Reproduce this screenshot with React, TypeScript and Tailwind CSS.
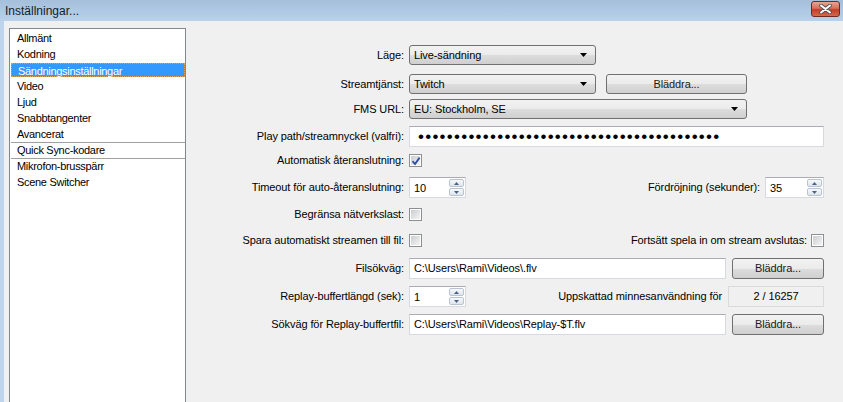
import React from "react";

const listItems: { name: string; selected?: boolean; sep?: boolean }[] = [
  { name: "Allmänt" },
  { name: "Kodning" },
  { name: "Sändningsinställningar", selected: true },
  { name: "Video" },
  { name: "Ljud" },
  { name: "Snabbtangenter" },
  { name: "Avancerat" },
  { name: "Quick Sync-kodare", sep: true },
  { name: "Mikrofon-brusspärr", sep: true },
  { name: "Scene Switcher" },
];

const Label = ({ text }: { text: string }) => (
  <div className="w-[223px] shrink-0 pr-[5px] text-right whitespace-nowrap">{text}</div>
);

const Combo = ({ value, w }: { value: string; w: string }) => (
  <div
    className={`${w} flex h-[20px] shrink-0 items-center justify-between rounded-[3px] border border-[#707070] bg-[linear-gradient(to_bottom,#f2f2f2_0%,#ebebeb_50%,#dddddd_51%,#cfcfcf_100%)] pr-[8px] pl-[4px]`}
  >
    <span>{value}</span>
    <svg width="7" height="4" viewBox="0 0 7 4">
      <path d="M0 0h7L3.5 4z" fill="#000" />
    </svg>
  </div>
);

const Button = ({ w, h }: { w: string; h: string }) => (
  <div
    className={`${w} ${h} flex shrink-0 items-center justify-center rounded-[3px] border border-[#707070] bg-[linear-gradient(to_bottom,#f2f2f2_0%,#ebebeb_50%,#dddddd_51%,#cfcfcf_100%)] text-[#1a1a1a]`}
  >
    Bläddra...
  </div>
);

const TextBox = ({ children, className }: { children: React.ReactNode; className: string }) => (
  <div
    className={`${className} flex h-[21px] items-center overflow-hidden border border-[#d6d9e0] border-t-[#abadb3] bg-white pl-[4px] whitespace-nowrap`}
  >
    {children}
  </div>
);

const SpinButton = ({ up }: { up?: boolean }) => (
  <div className="flex h-[8px] w-[15px] items-center justify-center rounded-[2px] border border-[#b9c4d2] bg-[linear-gradient(to_bottom,#f7f9fb,#dfe5ec)]">
    <svg width="5" height="3" viewBox="0 0 5 3">
      <path d={up ? "M0 3h5L2.5 0z" : "M0 0h5L2.5 3z"} fill="#4d6185" />
    </svg>
  </div>
);

const Spinner = ({ value, w }: { value: string; w: string }) => (
  <div
    className={`${w} flex h-[21px] shrink-0 border border-[#d6d9e0] border-t-[#abadb3] bg-white`}
  >
    <span className="flex-1 pt-[2px] pl-[4px]">{value}</span>
    <div className="flex flex-col justify-center gap-[1px] pr-[1px]">
      <SpinButton up />
      <SpinButton />
    </div>
  </div>
);

const CheckBox = ({ checked }: { checked?: boolean }) => (
  <div className="relative h-[13px] w-[13px] shrink-0 border border-[#8e8f8f] bg-white p-[1px]">
    <div className="h-full w-full bg-[linear-gradient(135deg,#cbcdd0,#f4f4f5)]" />
    {checked && (
      <svg className="absolute top-[1px] left-[1px]" width="10" height="10" viewBox="0 0 10 10">
        <path d="M1.5 5.2 L4 8 L8.6 1.6" fill="none" stroke="#2f4f9e" strokeWidth="1.8" />
      </svg>
    )}
  </div>
);

export default function App() {
  const dots = "•".repeat(42);

  return (
    <div className="flex h-[402px] w-[843px] flex-col overflow-hidden bg-[#bcd4ec] font-['Liberation_Sans',Arial,sans-serif] text-[11px] text-black">
      {/* title bar */}
      <div className="relative flex h-[21px] shrink-0 items-center bg-[linear-gradient(to_bottom,#a5bfdc,#b9d1ea)] pl-[5px]">
        <span className="text-[12px] text-[#151c28]">Inställningar...</span>
        <div className="absolute top-[1px] left-[811px] flex h-[16px] w-[29px] items-center justify-center rounded-[3px] border border-[#6b2a24] bg-[linear-gradient(to_bottom,#e9a593_0%,#d66f58_45%,#c23f25_55%,#d36a4f_100%)]">
          <svg width="13" height="10" viewBox="0 0 13 10">
            <path d="M2 1.5 L11 8.5 M11 1.5 L2 8.5" stroke="#4b4f58" strokeWidth="3.6" strokeLinecap="round" />
            <path d="M2 1.5 L11 8.5 M11 1.5 L2 8.5" stroke="#fff" strokeWidth="2" strokeLinecap="round" />
          </svg>
        </div>
      </div>

      <div className="flex flex-1 overflow-hidden pl-[4px]">
        <div className="flex flex-1 bg-[#f0f0f0]">
          {/* list */}
          <div className="mt-[7px] ml-[5px] h-[380px] w-[177px] shrink-0 border border-[#828790] bg-white py-[1px] pl-[1px] tracking-[-0.3px]">
            {listItems.map((item) => (
              <div
                key={item.name}
                className={`h-[16px] ${item.sep ? "border-t border-[#a0a0a0]" : "pt-[1px]"} pb-[1px]`}
              >
                <div
                  className={`h-[14px] pl-[6px] leading-[14px] whitespace-nowrap ${
                    item.selected
                      ? "border border-dotted border-[#d9a05a] bg-[#3399ff] pl-[5px] leading-[12px] text-white"
                      : ""
                  }`}
                >
                  {item.name}
                </div>
              </div>
            ))}
          </div>

          {/* settings panel */}
          <div className="flex flex-1 flex-col pt-[24px] pr-[19px] tracking-[-0.1px]">
            <div className="flex h-[20px] items-center">
              <Label text="Läge:" />
              <Combo value="Live-sändning" w="w-[187px]" />
            </div>
            <div className="mt-[9px] flex h-[20px] items-center">
              <Label text="Streamtjänst:" />
              <Combo value="Twitch" w="w-[187px]" />
              <div className="ml-[10px]">
                <Button w="w-[141px]" h="h-[20px]" />
              </div>
            </div>
            <div className="mt-[5px] flex h-[20px] items-center">
              <Label text="FMS URL:" />
              <Combo value="EU: Stockholm, SE" w="w-[338px]" />
            </div>
            <div className="mt-[7px] flex h-[21px] items-center">
              <Label text="Play path/streamnyckel (valfri):" />
              <TextBox className="flex-1 pl-[8px]">
                <span className="text-[17px] leading-none tracking-[1.25px]">{dots}</span>
              </TextBox>
            </div>
            <div className="mt-[3px] flex h-[20px] items-center">
              <Label text="Automatisk återanslutning:" />
              <CheckBox checked />
            </div>
            <div className="mt-[7px] flex h-[21px] items-center">
              <Label text="Timeout för auto-återanslutning:" />
              <Spinner value="10" w="w-[57px]" />
              <div className="flex-1" />
              <span className="mr-[5px] whitespace-nowrap">Fördröjning (sekunder):</span>
              <Spinner value="35" w="w-[59px]" />
            </div>
            <div className="mt-[6px] flex h-[20px] items-center">
              <Label text="Begränsa nätverkslast:" />
              <CheckBox />
            </div>
            <div className="mt-[6px] flex h-[20px] items-center">
              <Label text="Spara automatiskt streamen till fil:" />
              <CheckBox />
              <div className="flex-1" />
              <span className="mr-[4px] whitespace-nowrap">Fortsätt spela in om stream avslutas:</span>
              <CheckBox />
            </div>
            <div className="mt-[8px] flex h-[21px] items-center">
              <Label text="Filsökväg:" />
              <TextBox className="flex-1">C:\Users\Rami\Videos\.flv</TextBox>
              <div className="ml-[6px]">
                <Button w="w-[92px]" h="h-[21px]" />
              </div>
            </div>
            <div className="mt-[7px] flex h-[21px] items-center">
              <Label text="Replay-buffertlängd (sek):" />
              <Spinner value="1" w="w-[57px]" />
              <div className="flex-1" />
              <span className="mr-[6px] whitespace-nowrap">Uppskattad minnesanvändning för</span>
              <div className="flex h-[21px] w-[96px] items-center justify-center border border-[#dadada] bg-[#f0f0f0]">
                2 / 16257
              </div>
            </div>
            <div className="mt-[7px] flex h-[21px] items-center">
              <Label text="Sökväg för Replay-buffertfil:" />
              <TextBox className="flex-1">C:\Users\Rami\Videos\Replay-$T.flv</TextBox>
              <div className="ml-[6px]">
                <Button w="w-[92px]" h="h-[21px]" />
              </div>
            </div>
          </div>
        </div>
      </div>
    </div>
  );
}
